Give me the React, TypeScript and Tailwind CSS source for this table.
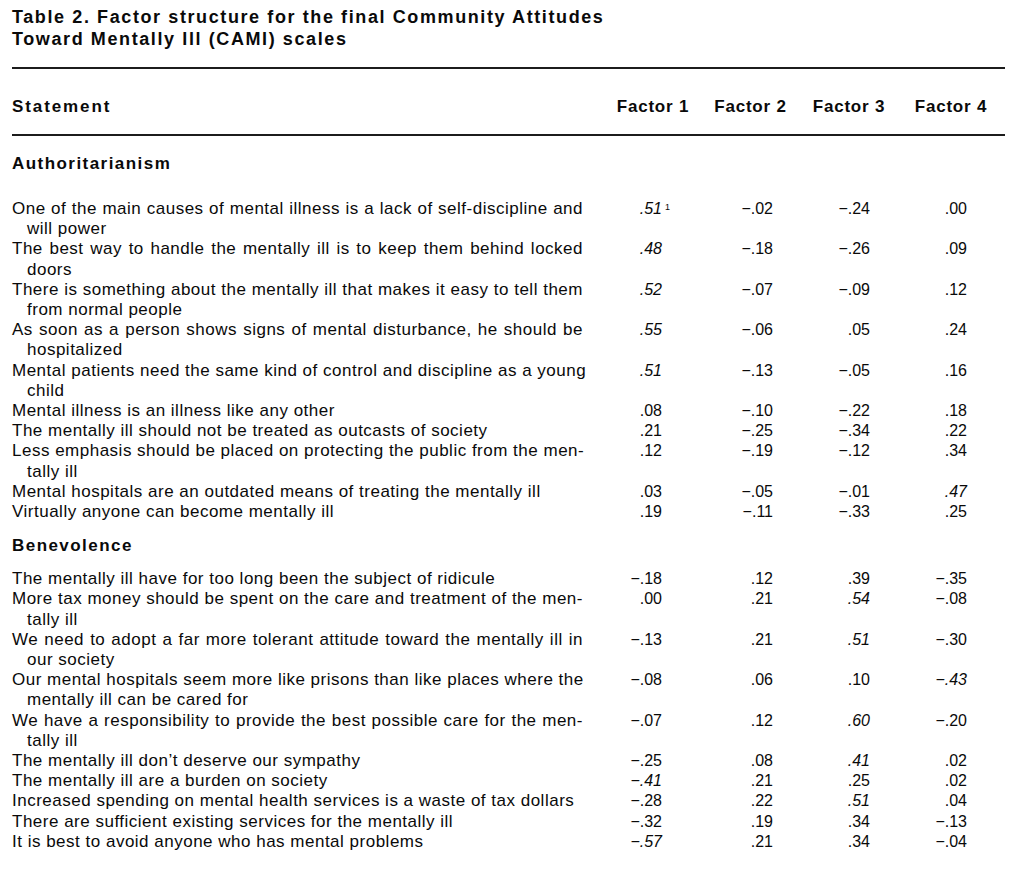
type Val = { v: string; i?: boolean; sup?: string };
type Row = { lines: string[]; vals: Val[] };

const n = (v: string, i = false): Val => ({ v, i });

const authoritarianism: Row[] = [
  {
    lines: ["One of the main causes of mental illness is a lack of self-discipline and", "will power"],
    vals: [{ v: ".51", i: true, sup: "1" }, n("−.02"), n("−.24"), n(".00")],
  },
  {
    lines: ["The best way to handle the mentally ill is to keep them behind locked", "doors"],
    vals: [n(".48", true), n("−.18"), n("−.26"), n(".09")],
  },
  {
    lines: ["There is something about the mentally ill that makes it easy to tell them", "from normal people"],
    vals: [n(".52", true), n("−.07"), n("−.09"), n(".12")],
  },
  {
    lines: ["As soon as a person shows signs of mental disturbance, he should be", "hospitalized"],
    vals: [n(".55", true), n("−.06"), n(".05"), n(".24")],
  },
  {
    lines: ["Mental patients need the same kind of control and discipline as a young", "child"],
    vals: [n(".51", true), n("−.13"), n("−.05"), n(".16")],
  },
  { lines: ["Mental illness is an illness like any other"], vals: [n(".08"), n("−.10"), n("−.22"), n(".18")] },
  { lines: ["The mentally ill should not be treated as outcasts of society"], vals: [n(".21"), n("−.25"), n("−.34"), n(".22")] },
  {
    lines: ["Less emphasis should be placed on protecting the public from the men-", "tally ill"],
    vals: [n(".12"), n("−.19"), n("−.12"), n(".34")],
  },
  { lines: ["Mental hospitals are an outdated means of treating the mentally ill"], vals: [n(".03"), n("−.05"), n("−.01"), n(".47", true)] },
  { lines: ["Virtually anyone can become mentally ill"], vals: [n(".19"), n("−.11"), n("−.33"), n(".25")] },
];

const benevolence: Row[] = [
  { lines: ["The mentally ill have for too long been the subject of ridicule"], vals: [n("−.18"), n(".12"), n(".39"), n("−.35")] },
  {
    lines: ["More tax money should be spent on the care and treatment of the men-", "tally ill"],
    vals: [n(".00"), n(".21"), n(".54", true), n("−.08")],
  },
  {
    lines: ["We need to adopt a far more tolerant attitude toward the mentally ill in", "our society"],
    vals: [n("−.13"), n(".21"), n(".51", true), n("−.30")],
  },
  {
    lines: ["Our mental hospitals seem more like prisons than like places where the", "mentally ill can be cared for"],
    vals: [n("−.08"), n(".06"), n(".10"), n("−.43", true)],
  },
  {
    lines: ["We have a responsibility to provide the best possible care for the men-", "tally ill"],
    vals: [n("−.07"), n(".12"), n(".60", true), n("−.20")],
  },
  { lines: ["The mentally ill don’t deserve our sympathy"], vals: [n("−.25"), n(".08"), n(".41", true), n(".02")] },
  { lines: ["The mentally ill are a burden on society"], vals: [n("−.41", true), n(".21"), n(".25"), n(".02")] },
  { lines: ["Increased spending on mental health services is a waste of tax dollars"], vals: [n("−.28"), n(".22"), n(".51", true), n(".04")] },
  { lines: ["There are sufficient existing services for the mentally ill"], vals: [n("−.32"), n(".19"), n(".34"), n("−.13")] },
  { lines: ["It is best to avoid anyone who has mental problems"], vals: [n("−.57", true), n(".21"), n(".34"), n("−.04")] },
];

// right padding of each factor column so the numbers line up like the print
const valPad = ["pr-[40px]", "pr-[26px]", "pr-[29px]", "pr-[36px]"];
const cols = "grid grid-cols-[592px_98px_97px_100px_104px]";

function StatementRow({ row }: { row: Row }) {
  return (
    <div className={`${cols} items-start leading-[20.2px]`}>
      <div className="w-[571px] text-[17px] tracking-[0.5px]">
        {row.lines.map((line, idx) =>
          idx === 0 && row.lines.length > 1 ? (
            <div key={idx} className="text-justify [text-align-last:justify] whitespace-nowrap">
              {line}
            </div>
          ) : (
            <div key={idx} className={idx > 0 ? "pl-[15px]" : ""}>
              {line}
            </div>
          )
        )}
      </div>
      {row.vals.map((val, k) => (
        <div key={k} className={`text-right text-[16px] ${valPad[k]}`}>
          <span className={`relative ${val.i ? "italic" : ""}`}>
            {val.v}
            {val.sup && <span className="absolute left-full top-[-3px] ml-[3px] text-[9px] not-italic">{val.sup}</span>}
          </span>
        </div>
      ))}
    </div>
  );
}

export default function App() {
  return (
    <div className="w-[1024px] h-[888px] bg-white text-[#0a0a0a] font-['Liberation_Sans',Arial,sans-serif] overflow-hidden">
      <div className="pl-3">
        <h1 className="pt-[6px] text-[18px] leading-[22px] font-bold tracking-[1.6px]">
          Table 2. Factor structure for the final Community Attitudes
          <br />
          Toward Mentally Ill (CAMI) scales
        </h1>
        <div className="mt-[17px] h-[2px] w-[993px] bg-[#1c1c1c]" />

        <div className={`${cols} mt-[28px] text-[17px] leading-[20px] font-bold tracking-[0.8px]`}>
          <div className="tracking-[1.9px]">Statement</div>
          <div className="text-center">Factor 1</div>
          <div className="text-center">Factor 2</div>
          <div className="text-center">Factor 3</div>
          <div className="text-center">Factor 4</div>
        </div>
        <div className="mt-[17px] h-[2px] w-[993px] bg-[#1c1c1c]" />

        <h2 className="mt-[18px] text-[17px] leading-[20px] font-bold tracking-[1.45px]">Authoritarianism</h2>
        <div className="mt-[25px]">
          {authoritarianism.map((row, idx) => (
            <StatementRow key={idx} row={row} />
          ))}
        </div>

        <h2 className="mt-[13.5px] text-[17px] leading-[20px] font-bold tracking-[1.45px]">Benevolence</h2>
        <div className="mt-[13.5px]">
          {benevolence.map((row, idx) => (
            <StatementRow key={idx} row={row} />
          ))}
        </div>
      </div>
    </div>
  );
}
